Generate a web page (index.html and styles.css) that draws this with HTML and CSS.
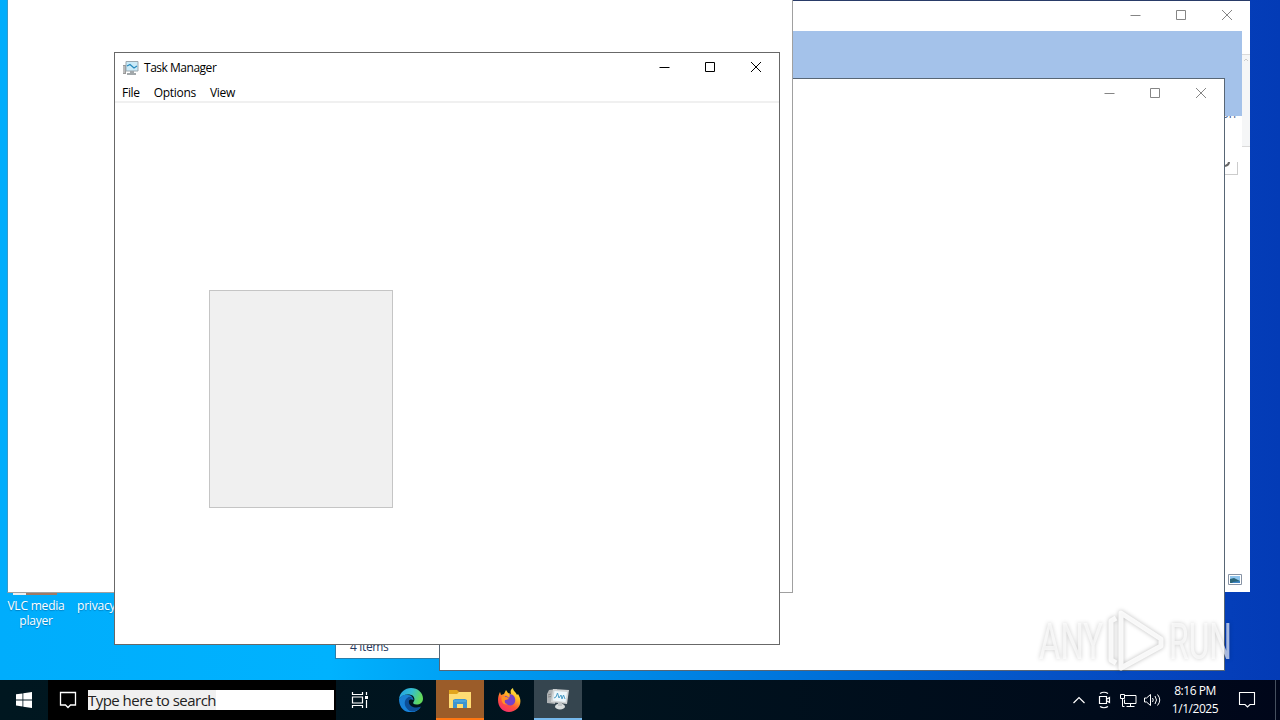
FILE: index.html
```html
<!DOCTYPE html>
<html lang="en">
<head>
  <meta charset="UTF-8">
  <meta name="viewport" content="width=device-width, initial-scale=1.0">
  <title>Task Manager</title>
  <link rel="stylesheet" href="styles.css">
</head>
<body>
  <svg class="defs" width="0" height="0">
    <symbol id="min" viewBox="0 0 12 12"><path d="M1.500 6.5h10" fill="none" stroke="currentColor"/></symbol>
    <symbol id="max" viewBox="0 0 12 12"><path d="M1.5 1.5h9v9h-9z" fill="none" stroke="currentColor"/></symbol>
    <symbol id="close" viewBox="0 0 12 12"><path d="M1 1l10 10M11 1L1 11" fill="none" stroke="currentColor"/></symbol>
  </svg>

  <main class="desktop">
    <div class="shortcut vlc"><i class="cone"></i>VLC media<br>player</div>
    <div class="shortcut privacy">privacy</div>

    <!-- explorer windows in the back -->
    <section class="window explorer">
      <header class="titlebar">
        <div class="controls">
          <svg><use href="#min"/></svg><svg><use href="#max"/></svg><svg><use href="#close"/></svg>
        </div>
      </header>
      <div class="ribbon"></div>
      <span class="ribbon-label">on</span>
      <div class="ribbon-edge"><svg width="6" height="4"><path d="M1 3l2-2 2 2" fill="none" stroke="#ccc"/></svg></div>
      <div class="address"><svg width="8" height="8"><path d="M4 0q0 3-4 4" fill="none" stroke="#666" stroke-width="2"/></svg></div>
      <svg class="view-icon" width="14" height="11" viewBox="0 0 14 11">
        <path d="M.5.5h13v10H.5z" fill="#fff" stroke="#8793a5"/>
        <path d="M2 2h10v7H2z" fill="#8fc5ed"/>
        <path d="M2 5l4-1 6 3v2H2z" fill="#2b6578"/>
        <path d="M5 8l7-1v2H4z" fill="#3f86c5"/>
      </svg>
    </section>

    <section class="window items"><span>4 items</span></section>

    <section class="window blank-right">
      <header class="titlebar">
        <div class="controls">
          <svg><use href="#min"/></svg><svg><use href="#max"/></svg><svg><use href="#close"/></svg>
        </div>
      </header>
    </section>

    <section class="window blank-left"></section>

    <section class="window taskmgr">
      <header class="titlebar">
        <svg class="app-icon" width="17" height="16" viewBox="0 0 17 16">
          <path d="M1 5h3v9H1z" fill="#999"/>
          <path d="M2 6v7" stroke="#ddd"/>
          <path d="M4 1.5h12v9.5H4z" fill="#c9eaf8" stroke="#9ba7ae"/>
          <path d="M5 6l3-1.500L12 8l3-2" fill="none" stroke="#2689bd" stroke-width="1.2"/>
          <path d="M8 11h4v2h2v2H5v-2h3z" fill="#a2a8ab"/>
        </svg>
        <h1>Task Manager</h1>
        <div class="controls">
          <svg><use href="#min"/></svg><svg><use href="#max"/></svg><svg><use href="#close"/></svg>
        </div>
      </header>
      <nav class="menu">
        <span>File</span>
        <span>Options</span>
        <span>View</span>
      </nav>
      <div class="content"><div class="panel"></div></div>
    </section>

    <svg class="watermark" width="204" height="70" viewBox="0 0 204 70">
      <g class="mark-text">
        <text x="4" y="51" textLength="64" lengthAdjust="spacingAndGlyphs">ANY</text>
        <text x="134" y="51" textLength="63" lengthAdjust="spacingAndGlyphs">RUN</text>
      </g>
      <g class="mark-play">
        <path d="M81 10l-5 3v39l5 3"/>
        <path d="M86 5l40 26v7L86 60z"/>
      </g>
    </svg>
  </main>

  <footer class="taskbar">
    <div class="start">
      <svg width="16" height="16" viewBox="0 0 16 16" fill="#fff">
        <path d="M0 2.3l6.5-.9v6.1H0zM7.3 1.3L16 0v7.5H7.3zM0 8.4h6.5v6.1L0 13.6zM7.3 8.4H16V16l-8.7-1.3z"/>
      </svg>
    </div>
    <div class="search">
      <svg width="18" height="18" viewBox="0 0 18 18"><path d="M1.5 1.5h15v12.5h-5L9 16.5 6.5 14h-5z" fill="none" stroke="#fff" stroke-width="1.3"/></svg>
      <div class="search-box"><span>Type here to search</span></div>
    </div>
    <div class="task">
      <svg width="18" height="16" viewBox="0 0 18 16" fill="none" stroke="#fff" stroke-width="1.2">
        <path d="M1.5 0v2.5h10V0M1.5 16v-2.5h10V16M1.5 5h10v6h-10zM15.5 0v3M15.5 8v8"/>
        <path d="M14 4h3v3h-3z" fill="#fff" stroke="none"/>
      </svg>
    </div>
    <div class="task edge">
      <svg width="24" height="24" viewBox="0 0 24 24">
        <defs>
          <linearGradient id="edgeTop" x1="0" x2="1" y2=".3"><stop offset="0" stop-color="#209fe4"/><stop offset=".55" stop-color="#35bdd0"/><stop offset="1" stop-color="#62d95b"/></linearGradient>
          <linearGradient id="edgeLow" x2="0" y2="1"><stop stop-color="#1b7fd0"/><stop offset="1" stop-color="#1684dd"/></linearGradient>
        </defs>
        <path d="M0 11C1 4 6 0 12 0c7 0 12 5 12 10.500 0 4-3 6-6.500 6-3 0-4-1.500-3-2.500 2-2 1-7-4-7.500C6 6 2 8 0 11z" fill="url(#edgeTop)"/>
        <path d="M0 11c2-4 6-5 9-4 3 0 5 2 5.500 5-3-2-6 0-6 3 0 5 6 7 13 4-3 5-8 6-12 5C3 23 0 17 0 11z" fill="url(#edgeLow)"/>
        <path d="M9.500 9c-4 2-5 7-2 11 2 3 5 4 8 3.300 3-.8 5-2.300 6.500-4.800-6 2.500-11 0-12-3.500-.6-2 .5-4 2-4.500 1 0 1.500.3 2 .5-1-2-3-2.500-4.500-2z" fill="#0d4f98"/>
      </svg>
    </div>
    <div class="task files">
      <svg width="22" height="20" viewBox="0 0 22 20">
        <path d="M0 1h8l2 2h11v6H0z" fill="#e3a51c"/>
        <path d="M0 5h8l2-2h12v16H0z" fill="#ffdc73"/>
        <path d="M4 19v-8l2-1h10l2 1v8h-4v-4H8v4z" fill="#3e94cf"/>
        <path d="M5 11h12v2H5z" fill="#4ba5dc"/>
      </svg>
    </div>
    <div class="task firefox">
      <svg width="24" height="24" viewBox="0 0 24 24">
        <defs>
          <linearGradient id="fox" x1=".8" y1="0" x2=".25" y2="1"><stop stop-color="#fff04b"/><stop offset=".35" stop-color="#ffb624"/><stop offset=".65" stop-color="#ff5437"/><stop offset="1" stop-color="#f52b71"/></linearGradient>
        </defs>
        <path d="M3 4l1 3 3-1 2-4 2 3 3 1c-1-3 0-5 2-6 0 3 3 4 4 7l1-1c6 9 0 18-9 18C3 24-2 14 3 4z" fill="url(#fox)"/>
        <path d="M8 8c2 0 3 1 4 2 1-2 1-3 0-4 5 0 7 4 6 8-1 3-4 4-7 3-4-1-5-4-3-5l3-1c-2 0-3-1-3-3z" fill="#7541c9"/>
        <path d="M5 8c1 1 3 1 5 1l2 2-4 1c-1 3 1 4 3 4-4 2-8-2-6-8z" fill="#ff9126"/>
      </svg>
    </div>
    <div class="task manager">
      <svg width="24" height="22" viewBox="0 0 24 22">
        <path d="M1 6l2-4 8-1-2 15-8-1z" fill="#aeb2b4"/>
        <path d="M2 7l3-1M2 9l3-.5" stroke="#888"/>
        <path d="M7 1l16 1-2 14-16-2z" fill="#d2d5d6"/>
        <path d="M8.500 3l12.500 1-1.500 10L7 12.500z" fill="#edf7fc"/>
        <path d="M8 10l2-1 1.500-4 1.500 5 2-3 1 4 1.500-4 1.500 4" fill="none" stroke="#4a9cc6"/>
        <ellipse cx="14" cy="18.500" rx="5" ry="3" fill="#d8dddd"/>
        <path d="M12 14h4v4h-4z" fill="#bfc4c6"/>
      </svg>
    </div>
    <div class="tray">
      <svg width="12" height="8" viewBox="0 0 12 8"><path d="M.5 7L6 1.500 11.500 7" fill="none" stroke="#fff" stroke-width="1.2"/></svg>
      <svg class="meet" width="13" height="18" viewBox="0 0 13 18" fill="none" stroke="#fff"><path d="M2 2.500q4-2.500 8 0M2 15.500q4 2.500 8 0M1.500 5.500h7v7h-7zM9 8l2.500-1.500v5L9 10" stroke-width="1.2"/></svg>
      <svg class="network" width="17" height="15" viewBox="0 0 17 15" fill="none" stroke="#fff"><path d="M5 2.500h11v8H4.500v-4M10.500 10.500v3M6.500 13.500h8M.5 1.500h4v4h-4zM2.500 5.500v8h2"/></svg>
      <svg class="sound" width="17" height="14" viewBox="0 0 17 14" fill="none" stroke="#fff"><path d="M.5 5h2L6.500 1.500v11L2.500 9h-2zM8.500 5q1.500 2 0 4M11 3q3 4 0 8M13.500 1.500q4.500 5.500 0 11"/></svg>
      <div class="clock"><span>8:16 PM</span><span>1/1/2025</span></div>
      <svg class="notify" width="18" height="18" viewBox="0 0 18 18"><path d="M1.500 1.500h15v12H12L9.500 16 7 13.500H1.500z" fill="none" stroke="#fff" stroke-width="1.1"/></svg>
    </div>
  </footer>
</body>
</html>
```
FILE: styles.css
```css
* {
  box-sizing: border-box;
}

body {
  margin: 0;
  width: 1280px;
  height: 720px;
  overflow: hidden;
  font-family: "Open Sans", "Noto Sans", sans-serif;
  font-size: 12px;
  display: flex;
  flex-direction: column;
}

svg {
  display: block;
  flex-shrink: 0;
}

.defs {
  position: absolute;
}

.desktop {
  position: relative;
  height: 680px;
  overflow: hidden;
  background: linear-gradient(90deg, #00adfc 0, #00b2fe 330px, #009af0 500px, #0066d3 900px, #0552c6 1050px, #043eb9 1230px, #033bb6 1280px);
}

/* desktop shortcuts */
.shortcut {
  position: absolute;
  top: 598px;
  line-height: 15px;
  text-align: center;
  color: #fff;
  letter-spacing: -0.2px;
  white-space: nowrap;
  text-shadow: 0 1px 1px rgba(0, 60, 110, 0.4);
}

.vlc {
  left: 6px;
  width: 60px;
}

.privacy {
  left: 77px;
}

.cone {
  position: absolute;
  left: 7px;
  top: -6px;
  width: 44px;
  height: 3px;
  background: linear-gradient(90deg, #eee 13px, #a07964 13px);
}

/* windows */
.window {
  position: absolute;
  background: #fff;
  border: 1px solid #686868;
}

.titlebar {
  height: 28px;
  display: flex;
  align-items: center;
}

.controls {
  display: flex;
  margin-left: auto;
  gap: 34px;
  color: #858585;
}

.controls svg {
  width: 12px;
  height: 12px;
}

.explorer {
  left: 700px;
  top: 0;
  width: 550px;
  height: 592px;
  border-width: 1px 0 0;
  border-color: #293b68;
}

.explorer .controls {
  padding-right: 17px;
}

.ribbon {
  height: 85px;
  margin-top: 2px;
  margin-right: 8px;
  background: #a4c2ea;
}

.ribbon-label {
  position: absolute;
  right: 14px;
  top: 105px;
  height: 16px;
  color: #4a5f88;
  line-height: 16px;
  clip-path: inset(10px 0 0 0);
}

.ribbon-edge {
  position: absolute;
  right: 0;
  top: 53px;
  width: 8px;
  height: 93px;
  padding: 3px 1px;
  background: #f5f6f7;
  border: solid #dadada;
  border-width: 1px 0;
}

.address {
  position: absolute;
  right: 12px;
  top: 161px;
  width: 18px;
  height: 13px;
  padding-left: 5px;
  border: solid #ccc;
  border-width: 0 1px 1px 0;
}

.view-icon {
  position: absolute;
  right: 8px;
  bottom: 7px;
}

.items {
  left: 335px;
  top: 500px;
  width: 200px;
  height: 159px;
  padding: 0 14px 3px;
  display: flex;
  align-items: flex-end;
  color: #26395f;
  line-height: 16px;
  letter-spacing: -0.35px;
  border-color: #287eab;
}

.blank-right {
  left: 439px;
  top: 78px;
  width: 786px;
  height: 593px;
  border-color: #586675;
}

.blank-right .controls {
  padding-right: 17px;
}

.blank-left {
  left: 7px;
  top: -1px;
  width: 786px;
  height: 594px;
  border-color: #a0a0a0;
  border-left-color: #3a9ac8;
}

.taskmgr {
  left: 114px;
  top: 52px;
  width: 666px;
  height: 593px;
}

.taskmgr .titlebar {
  height: 28px;
  padding: 0 17px 0 7px;
}

.taskmgr .controls {
  color: #000;
}

.app-icon {
  margin-top: 2px;
}

.taskmgr h1 {
  margin: 2px 0 0 5px;
  font-size: 12px;
  line-height: 18px;
  font-weight: 400;
  letter-spacing: -0.48px;
}

.menu {
  height: 22px;
  display: flex;
  gap: 14px;
  padding-left: 7px;
  line-height: 24px;
  letter-spacing: -0.3px;
  border-bottom: 2px solid #f0f0f0;
}

.content {
  padding: 187px 94px;
}

.panel {
  width: 184px;
  height: 218px;
  background: #f0f0f0;
  border: 1px solid #c5c5c5;
}

.watermark {
  position: absolute;
  left: 1035px;
  top: 608px;
  overflow: visible;
  filter: drop-shadow(0 0 2px rgba(0, 0, 0, 0.3));
}

.mark-text {
  fill: rgba(255, 255, 255, 0.65);
  font-family: Roboto, sans-serif;
  font-size: 50px;
}

.mark-play {
  fill: none;
  stroke: rgba(255, 255, 255, 0.85);
  stroke-width: 5;
  stroke-linejoin: round;
}

/* taskbar */
.taskbar {
  height: 40px;
  display: flex;
  color: #fff;
  background: linear-gradient(90deg, #001720, #00131e 600px, #000b1b 1100px, #00061a);
}

.start,
.task {
  width: 48px;
  display: flex;
  align-items: center;
  justify-content: center;
}

.search {
  width: 288px;
  display: flex;
  align-items: center;
  gap: 11px;
  padding-left: 11px;
  background: #000;
}

.search-box {
  width: 246px;
  height: 20px;
  background: #fff;
  color: #222;
  font-size: 15px;
  line-height: 21px;
}

.search-box span {
  display: inline-block;
  height: 20px;
  background: #f0f0f0;
  letter-spacing: -0.53px;
}

.edge {
  margin-left: 3px;
}

.files {
  margin-left: 1px;
  background: #9b5c29;
  border-bottom: 2px solid #ff7612;
}

.firefox {
  margin-left: 1px;
}

.manager {
  margin-left: 1px;
  background: #35454f;
  border-bottom: 2px solid #76b9ed;
}

.tray {
  margin-left: auto;
  margin-right: 4px;
  padding-right: 19px;
  display: flex;
  align-items: center;
  border-right: 1px solid #46505f;
}

.meet {
  margin-left: 13px;
}

.network {
  margin-left: 9px;
}

.sound {
  margin-left: 7px;
}

.clock {
  width: 54px;
  margin-left: 7px;
  display: flex;
  flex-direction: column;
  align-items: center;
  line-height: 18px;
  letter-spacing: -0.45px;
  white-space: nowrap;
}

.notify {
  margin-left: 16px;
}
```
